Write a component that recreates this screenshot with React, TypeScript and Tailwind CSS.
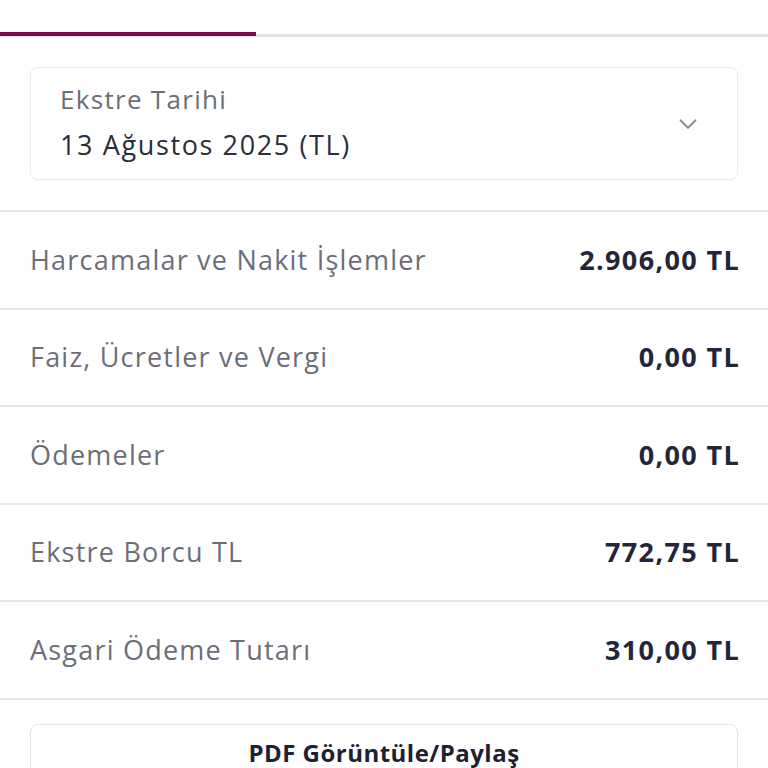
import { ChevronDown } from 'lucide-react'

const rows = [
  { label: 'Harcamalar ve Nakit İşlemler', value: '2.906,00 TL' },
  { label: 'Faiz, Ücretler ve Vergi', value: '0,00 TL' },
  { label: 'Ödemeler', value: '0,00 TL' },
  { label: 'Ekstre Borcu TL', value: '772,75 TL' },
  { label: 'Asgari Ödeme Tutarı', value: '310,00 TL' },
]

export default function App() {
  return (
    <div
      className="w-[768px] h-[768px] overflow-hidden bg-white"
      style={{ fontFamily: '"Open Sans", "Noto Sans", sans-serif' }}
    >
      {/* tabs */}
      <div className="h-[32px]" />
      <div className="relative h-[5px]">
        <div className="absolute left-0 right-0 bottom-0 h-[3px] bg-[#e4e4e7]" />
        <div className="absolute left-0 top-0 h-[4px] w-[256px] bg-[#7c0a4f]" />
      </div>

      {/* statement date select */}
      <div className="px-[30px] pt-[30px] pb-[30px]">
        <div className="flex items-center justify-between h-[113px] rounded-[8px] border border-[#ebebee] shadow-[0_1px_2px_rgba(0,0,0,0.04)] pl-[29px] pr-[34px]">
          <div className="flex flex-col">
            <span className="text-[26px] leading-[44px] tracking-[0.05em] text-[#6b6e78] -mt-[4px]">Ekstre Tarihi</span>
            <span className="text-[27px] leading-[44px] tracking-[0.06em] text-[#2b2d3a] mt-[2px]">13 Ağustos 2025 (TL)</span>
          </div>
          <ChevronDown className="w-[30px] h-[30px] text-[#8a8d99]" strokeWidth={1.5} />
        </div>
      </div>

      {/* totals */}
      <div className="border-t-2 border-[#e6e6e9]">
        {rows.map((r) => (
          <div
            key={r.label}
            className="flex items-center justify-between h-[97.6px] px-[30px] border-b-2 border-[#e6e6e9]"
          >
            <span className="text-[27px] tracking-[0.045em] text-[#6b6e78]">{r.label}</span>
            <span className="text-[27px] font-bold tracking-[0.05em] text-[#23263a] -mr-[2px]">{r.value}</span>
          </div>
        ))}
      </div>

      {/* pdf button */}
      <div className="px-[30px] pt-[24px]">
        <div className="flex items-start justify-center pt-[10px] h-[60px] rounded-[8px] border border-[#e6e6e9] shadow-[0_1px_3px_rgba(0,0,0,0.06)]">
          <span className="text-[24px] font-bold tracking-[0.02em] text-[#1f2130]">PDF Görüntüle/Paylaş</span>
        </div>
      </div>
    </div>
  )
}
